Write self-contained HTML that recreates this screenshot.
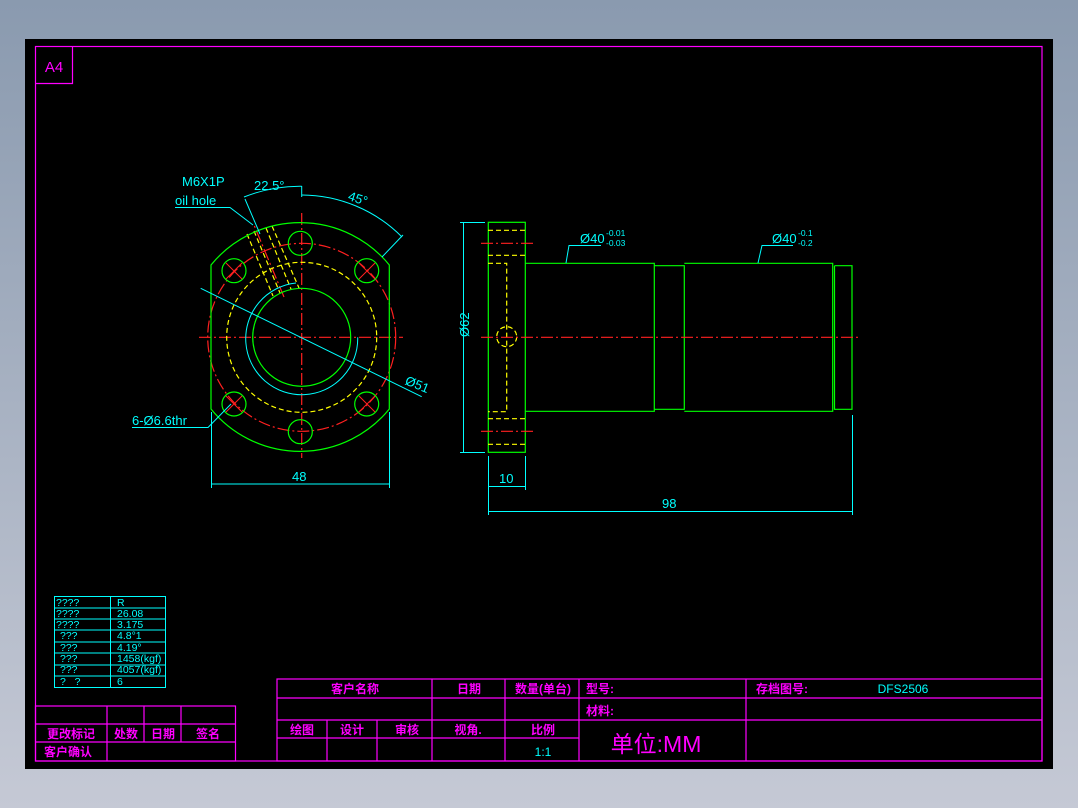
<!DOCTYPE html>
<html><head><meta charset="utf-8"><style>
html,body{margin:0;padding:0;width:1078px;height:808px;overflow:hidden;background:linear-gradient(#8a9aaf,#c5c9d5);}
svg{display:block}
text{font-family:"Liberation Sans","Noto Sans CJK SC",sans-serif;}
</style></head><body>
<svg width="1078" height="808" viewBox="0 0 1078 808" xmlns="http://www.w3.org/2000/svg">
<rect x="25" y="39" width="1028" height="730" fill="#000"/>
<g fill="none" stroke="#ff00ff" stroke-width="1.2">
<rect x="35.5" y="46.5" width="1006.5" height="714.5"/>
<path d="M35.5 83.5H72.5V46.5"/>
<rect x="277" y="679" width="765" height="82"/>
<path d="M277 698H1042M277 720H1042M277 738H579M432 679V761M505 679V761M579 679V761M746 679V761M327 720V761M377 720V761"/>
<rect x="35.5" y="706" width="200" height="55"/>
<path d="M35.5 724H235.5M35.5 742H235.5M107 706V761M144 706V742M181 706V742"/>
</g>
<g fill="#ff00ff" font-weight="bold" font-size="12" text-anchor="middle">
<text x="54" y="72" font-size="15" font-weight="normal">A4</text>
<text x="355" y="693">客户名称</text>
<text x="469" y="693">日期</text>
<text x="543" y="693">数量(单台)</text>
<text x="600" y="693">型号:</text>
<text x="782" y="693">存档图号:</text>
<text x="600" y="715">材料:</text>
<text x="302" y="734">绘图</text>
<text x="352" y="734">设计</text>
<text x="407" y="734">审核</text>
<text x="468" y="734">视角.</text>
<text x="543" y="734">比例</text>
<text x="656" y="752" font-size="23" font-weight="normal">单位:MM</text>
<text x="71" y="738">更改标记</text>
<text x="126" y="738">处数</text>
<text x="163" y="738">日期</text>
<text x="208" y="738">签名</text>
<text x="68" y="756">客户确认</text>
</g>
<g fill="#00ffff" font-size="12" text-anchor="middle">
<text x="903" y="693">DFS2506</text>
<text x="543" y="756">1:1</text>
</g>
<g fill="none" stroke="#00ffff" stroke-width="1">
<rect x="54.5" y="596.5" width="111" height="91"/>
<path d="M110.5 596V688M54 608H166M54 619H166M54 630H166M54 642H166M54 653H166M54 665H166M54 676H166"/>
</g>
<g fill="#00ffff" font-size="10.5">
<text x="56" y="606">????</text><text x="117" y="606">R</text>
<text x="56" y="617">????</text><text x="117" y="617">26.08</text>
<text x="56" y="628">????</text><text x="117" y="628">3.175</text>
<text x="60" y="639">???</text><text x="117" y="639">4.8°1</text>
<text x="60" y="651">???</text><text x="117" y="651">4.19°</text>
<text x="60" y="662">???</text><text x="117" y="662">1458(kgf)</text>
<text x="60" y="673">???</text><text x="117" y="673">4057(kgf)</text>
<text x="60" y="685">?&#160;&#160;&#160;?</text><text x="117" y="685">6</text>
</g>

<g fill="none" stroke-width="1.2">
<g stroke="#ff2020" stroke-dasharray="12 3 2 3">
<circle cx="301.7" cy="337.3" r="94"/>
<path d="M199 337.3H403M301.7 213V458M284 297L254 225"/>
</g>
<g stroke="#ffff00" stroke-dasharray="5 3">
<circle cx="301.7" cy="337.3" r="75"/>
<path d="M247 234L273 296M254 231L280 293M266 228L291 289M272 226L299 288"/>
</g>
<g stroke="#00ff00">
<path d="M211 265V409A115 115 0 0 0 389.3 409V265A115 115 0 0 0 211 265Z"/>
<circle cx="301.7" cy="337.3" r="49"/>
<circle cx="300.3" cy="243.3" r="12"/>
<circle cx="300.3" cy="431.7" r="12"/>
<circle cx="234" cy="270.7" r="12"/>
<circle cx="366.7" cy="270.7" r="12"/>
<circle cx="234" cy="404" r="12"/>
<circle cx="366.7" cy="404" r="12"/>
</g>
<g stroke="#ff2020" stroke-width="1">
<path d="M226 263L242 279M242 263L226 279M359 263L375 279M375 263L359 279M226 396L242 412M242 396L226 412M359 396L375 412M375 396L359 412"/>
</g>
<g stroke="#00ffff" stroke-width="1">
<path d="M296 283A56 56 0 1 0 357.7 337.3"/>
<path d="M200.7 288.3L421.7 396.7"/>
<path d="M301.7 186V197M244 197A151 151 0 0 1 301.7 186.3M245 199L260 234"/>
<path d="M301.7 195A142 142 0 0 1 402 237M403 235L382 257"/>
<path d="M175 207.5H230L253 225M132 427.5H208L231 404"/>
<path d="M211.5 412V488M389.5 412V488M211 484H389"/>
</g>
</g>
<g fill="#00ffff" font-size="13">
<text x="182" y="186">M6X1P</text>
<text x="175" y="205">oil hole</text>
<text x="254" y="190">22.5°</text>
<text x="348" y="203" transform="rotate(18 358 199)">45°</text>
<text x="405" y="388" transform="rotate(22 415 384)">Ø51</text>
<text x="132" y="425">6-Ø6.6thr</text>
<text x="292" y="481">48</text>
</g>

<g fill="none" stroke-width="1.2">
<g stroke="#00ff00">
<rect x="488.3" y="222.3" width="37" height="230"/>
<path d="M525.3 263.3H654.3V411.3H525.3M654.3 265.7H684.3V409.3H654.3M684.3 263.3H832.7V411.3H684.3M834.5 265.7H852V409.3H834.5V265.7"/>
</g>
<g stroke="#ffff00" stroke-dasharray="5 3">
<path d="M488 230.3H525M488 255.3H525M488 418.7H525M488 444.3H525M488 263.3H506.7V411.7H488"/>
<circle cx="506.7" cy="336.7" r="10"/>
</g>
<g stroke="#ff2020" stroke-dasharray="12 3 2 3">
<path d="M481 337.3H858M481 243.3H533M481 431.3H533"/>
</g>
<g stroke="#00ffff" stroke-width="1">
<path d="M460 222.5H485M460 452.5H485M463.5 222V452"/>
<path d="M488.5 456V515M525.5 456V490M488 486.5H525M852.5 415V515M488 511.5H852"/>
<path d="M601 245.5H569L566 263"/>
<path d="M793 245.5H762L758 263"/>
</g>
</g>
<g fill="#00ffff" font-size="13">
<text x="458" y="348" transform="rotate(-90 458 337)">Ø62</text>
<text x="499" y="483">10</text>
<text x="662" y="508">98</text>
<text x="580" y="243">Ø40</text>
<text x="606" y="236" font-size="8.5">-0.01</text>
<text x="606" y="246" font-size="8.5">-0.03</text>
<text x="772" y="243">Ø40</text>
<text x="798" y="236" font-size="8.5">-0.1</text>
<text x="798" y="246" font-size="8.5">-0.2</text>
</g>
</svg>
</body></html>
